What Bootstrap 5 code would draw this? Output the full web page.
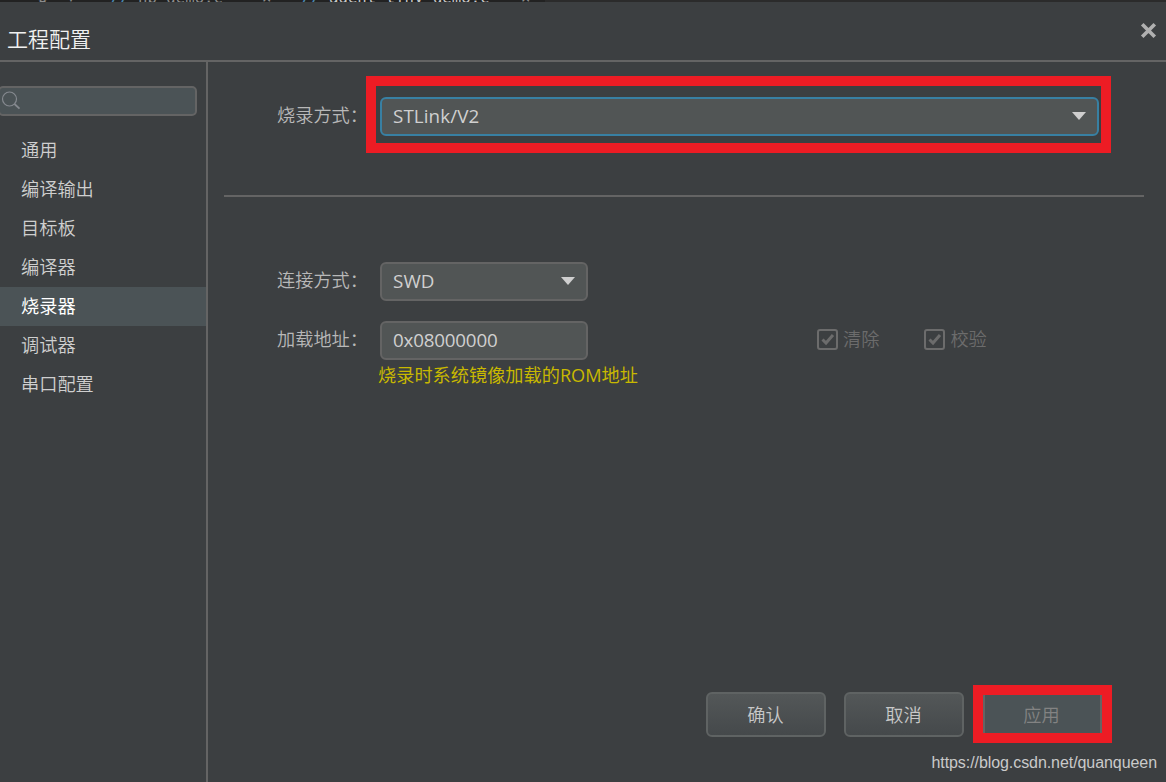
<!DOCTYPE html>
<html lang="zh-CN">
<head>
<meta charset="utf-8">
<title>工程配置</title>
<meta name="viewport" content="width=device-width, initial-scale=1">
<link href="https://cdn.jsdelivr.net/npm/bootstrap@5.3.0/dist/css/bootstrap.min.css" rel="stylesheet">
<style>
  body { background:#3c3f41; color:#c4c4c4; font-family:"Open Sans","Noto Sans CJK SC",sans-serif; font-size:18.2px; line-height:27px; font-weight:350; height:782px; }
  .editor-tabs { height:2px; background:#2b2b2b; font-size:15.7px; line-height:20px; font-family:"DejaVu Sans Mono",monospace; }
  .tab-row { margin-top:-12px; white-space:pre; width:545px; background:#222; padding-left:38px; }
  .tab-row > * { flex:none; }
  .tab-row b { color:#4a86b0; font-weight:700; }
  .tab-dim { color:#8c8c8c; }
  .tab-lit { color:#c8c8c8; }
  .dialog-head { height:60px; border-bottom:2px solid #646464; padding:0 9px 0 7px; }
  .dialog-title { font-size:21px; line-height:30px; color:#f0f0f0; margin-top:22px; }
  .close-x { margin-top:20px; }
  .side { width:208px; border-right:2px solid #646464; padding-top:24px; }
  .search { height:30px; width:199px; margin-left:-2px; border:2px solid #646464; border-radius:5px; background:#4b5356; }
  .side .list-group { margin-top:15px; }
  .side .list-group-item { height:39px; padding:6px 0 0 21px; border:0; background:none; color:#cfcfcf; border-radius:0; }
  .side .list-group-item.active { background:#4b5356; color:#fff; font-weight:400; margin:0; }
  .field { height:39px; border:2px solid #646464; border-radius:6px; background:#515555; padding:0 11px 0 11px; color:#d0d0d0; font-weight:400; font-size:18.8px; letter-spacing:.1px; }
  .field svg { margin-bottom:1px; }
  .field.focused { border-color:#3880a3; }
  .addr { letter-spacing:-.2px; }
  .w-field { width:208px; }
  .mark-frame { border:10px solid #ed1c24; }
  .mark-select { width:745px; height:77px; padding:11px 2px 7px 4px; }
  .lbl { width:104px; padding-left:1px; padding-bottom:2px; white-space:nowrap; color:#b8b8b8; }
  .lbl-first { width:90px; padding-bottom:0; padding-top:1px; }
  .first-row { padding-top:14px; }
  .rule { height:2px; background:#646464; margin:42px 22px 65px 16px; }
  .form-area { padding-left:68px; }
  .hint { color:#c8b800; line-height:26px; margin-left:102px; margin-top:2px; font-size:18.2px; font-weight:400; }
  .tick { color:#6c6c6c; gap:5px; padding-bottom:2px; }
  .tick-a { margin-left:229px; }
  .tick-b { margin-left:45px; }
  .dlg-btn { width:120px; height:45px; border:2px solid #5f6363; border-radius:6px; background:linear-gradient(#535758,#45494b); color:#c8c8c8; font-size:18.2px; font-weight:350; padding:2px 1px 0 0; }
  .mark-apply { width:139px; height:58px; }
  .apply-btn { background:#4b5356; color:#838383; border-left:2px solid #646464; border-right:2px solid #646464; padding:2px 2px 0 0; }
  .url { font-family:"Liberation Sans",Arial,sans-serif; font-size:16px; letter-spacing:-.07px; font-weight:400; line-height:20px; color:#cacaca; padding-right:9px; margin:10px 0 9px; }
</style>
</head>
<body class="d-flex flex-column overflow-hidden">
  <div class="editor-tabs overflow-hidden flex-shrink-0">
    <div class="tab-row d-flex">
      <span class="tab-dim" style="width:72px">⚙  ▾</span>
      <b style="width:28px">//</b><span class="tab-dim" style="width:124px">hp_demo.c</span><span class="tab-dim" style="width:39px">×</span>
      <b style="width:28px">//</b><span class="tab-lit" style="width:192px">agent_tiny_demo.c</span><span class="tab-dim">×</span>
    </div>
  </div>
  <header class="dialog-head d-flex justify-content-between align-items-start flex-shrink-0">
    <div class="dialog-title">工程配置</div>
    <svg class="close-x" width="17" height="17" viewBox="0 0 17 17"><path d="M3.5 3.5 13.5 13.5M13.5 3.5 3.5 13.5" stroke="#b0b0b0" stroke-width="3.6" stroke-linecap="square" fill="none"/></svg>
  </header>
  <div class="d-flex flex-grow-1">
    <aside class="side flex-shrink-0">
      <div class="search d-flex align-items-center"><svg width="22" height="22" viewBox="0 0 22 22"><g fill="none" stroke="#85898f" stroke-width="1.2"><circle cx="9.5" cy="9" r="7"/><path d="M14.5 14 19.5 18.7" stroke-width="1.8"/></g></svg></div>
      <div class="list-group list-group-flush">
        <a class="list-group-item">通用</a>
        <a class="list-group-item">编译输出</a>
        <a class="list-group-item">目标板</a>
        <a class="list-group-item">编译器</a>
        <a class="list-group-item active">烧录器</a>
        <a class="list-group-item">调试器</a>
        <a class="list-group-item">串口配置</a>
      </div>
    </aside>
    <main class="flex-grow-1 d-flex flex-column">
      <div class="form-area first-row d-flex align-items-center">
        <div class="lbl lbl-first">烧录方式：</div>
        <div class="mark-frame mark-select">
          <div class="field focused d-flex align-items-center justify-content-between"><span>STLink/V2</span><svg width="14" height="8" viewBox="0 0 14 8"><path d="M0 0H14L7 8Z" fill="#cfcfcf"/></svg></div>
        </div>
      </div>
      <div class="rule"></div>
      <div class="form-area d-flex align-items-center">
        <div class="lbl">连接方式：</div>
        <div class="field w-field d-flex align-items-center justify-content-between"><span>SWD</span><svg width="14" height="8" viewBox="0 0 14 8"><path d="M0 0H14L7 8Z" fill="#cfcfcf"/></svg></div>
      </div>
      <div class="form-area d-flex align-items-center" style="margin-top:20px">
        <div class="lbl">加载地址：</div>
        <div class="field addr w-field d-flex align-items-center">0x08000000</div>
        <div class="tick tick-a d-flex align-items-center"><svg width="21" height="21" viewBox="0 0 21 21" fill="none" stroke="#6c6c6c"><rect x="1" y="1" width="19" height="19" rx="2" stroke-width="2"/><path d="M5.5 10.5 9 14 16 6" stroke-width="3"/></svg>清除</div>
        <div class="tick tick-b d-flex align-items-center"><svg width="21" height="21" viewBox="0 0 21 21" fill="none" stroke="#6c6c6c"><rect x="1" y="1" width="19" height="19" rx="2" stroke-width="2"/><path d="M5.5 10.5 9 14 16 6" stroke-width="3"/></svg>校验</div>
      </div>
      <div class="form-area"><div class="hint">烧录时系统镜像加载的ROM地址</div></div>
      <div class="mt-auto d-flex justify-content-end align-items-center" style="padding-right:54px">
        <button class="dlg-btn">确认</button>
        <button class="dlg-btn" style="margin:0 9px 0 18px">取消</button>
        <div class="mark-frame mark-apply d-flex"><div class="apply-btn flex-grow-1 d-flex align-items-center justify-content-center">应用</div></div>
      </div>
      <div class="url text-end">https://blog.csdn.net/quanqueen</div>
    </main>
  </div>
<script src="https://cdn.jsdelivr.net/npm/bootstrap@5.3.0/dist/js/bootstrap.bundle.min.js"></script>
</body>
</html>
